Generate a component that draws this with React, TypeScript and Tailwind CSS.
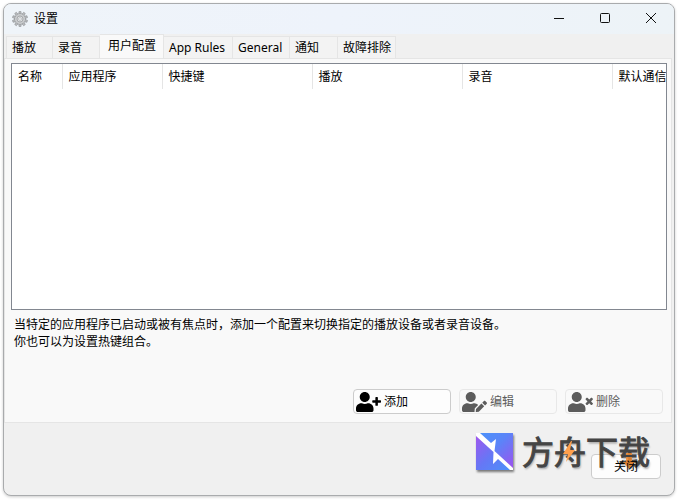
import React, { useState } from "react";
import { FaUserEdit, FaUserPlus, FaUserTimes } from "react-icons/fa";

const tabs = [
  { label: '播放', width: 'w-[47px]' },
  { label: '录音', width: 'w-[47px]' },
  { label: '用户配置', width: 'w-[64px]' },
  { label: 'App Rules', width: 'w-[69px]' },
  { label: 'General', width: 'w-[57px]' },
  { label: '通知', width: 'w-[48px]' },
  { label: '故障排除', width: 'w-[58px]' },
];

const columns = [
  { label: '名称', width: 'w-[50px]' },
  { label: '应用程序', width: 'w-[100px]' },
  { label: '快捷键', width: 'w-[150px]' },
  { label: '播放', width: 'w-[150px]' },
  { label: '录音', width: 'w-[150px]' },
  { label: '默认通信', width: 'w-[150px]' },
];

const gearTeeth = [0, 36, 72, 108, 144, 180, 216, 252, 288, 324];

function GearIcon() {
  return <svg className="h-4 w-4" viewBox="0 0 32 32" aria-hidden="true">
    <g fill="#b9bbbd" stroke="#85878a" strokeWidth="1">
      {gearTeeth.map(angle => (
        <path key={angle} d="M13.4 7 L14 0.8 H18 L18.6 7 Z" transform={`rotate(${angle} 16 16)`} />
      ))}
      <circle cx="16" cy="16" r="10.5" />
    </g>
    <circle cx="16" cy="16" r="10.2" fill="#c9cbcd" />
    <circle cx="16" cy="16" r="6" fill="#dfe1e3" stroke="#999b9d" strokeWidth="1.5" />
    <circle cx="16" cy="16" r="2.8" fill="#f4f6f8" stroke="#999b9d" strokeWidth="1" />
  </svg>
}

function TitleBar() {
  return <header className="flex h-[30px] shrink-0 items-center bg-linear-to-r from-[#eff4f9] via-[#eef3fb] to-[#edf3f7] pl-2">
    <GearIcon />
    <h1 className="pl-[6px] text-xs leading-4">设置</h1>
    <div className="ml-auto flex h-full">
      <button type="button" aria-label="最小化" className="flex w-[46px] items-center justify-center">
        <svg className="h-3 w-3" viewBox="0 0 12 12" stroke="#111" fill="none"><path d="M1 5.5H11" /></svg>
      </button>
      <button type="button" aria-label="最大化" className="flex w-[46px] items-center justify-center">
        <svg className="h-3 w-3" viewBox="0 0 12 12" stroke="#111" fill="none"><rect x="1.5" y="0.5" width="9" height="9" rx="1" /></svg>
      </button>
      <button type="button" aria-label="关闭窗口" className="flex w-[46px] items-center justify-center">
        <svg className="h-3 w-3" viewBox="0 0 12 12" stroke="#111" fill="none"><path d="M1 0L11 10M11 0L1 10" /></svg>
      </button>
    </div>
  </header>
}

function TabStrip({ active, onSelect }: {
  active: string;
  onSelect: (label: string) => void;
}) {
  return <div role="tablist" className="flex h-6 shrink-0 items-end pl-[2px]">
    {tabs.map(tab => (
      <button
        key={tab.label}
        type="button"
        role="tab"
        aria-selected={tab.label === active}
        className={`${tab.width} shrink-0 whitespace-nowrap border-t border-r border-[#e5e5e5] text-left first:border-l ${
          tab.label === active ? 'h-6 bg-[#f9f9f9] pb-[2px] pl-2' : 'h-[22px] bg-[#f3f3f3] pl-[5px]'
        }`}
        onClick={() => onSelect(tab.label)}
      >
        {tab.label}
      </button>
    ))}
  </div>
}

function ProfileTable() {
  return <div className="min-h-0 flex-1 overflow-hidden border border-[#828790] bg-white">
    <table className="w-[750px] table-fixed border-collapse">
      <thead>
        <tr>
          {columns.map(column => (
            <th key={column.label} scope="col" className={`${column.width} h-[25px] border-r border-[#e5e5e5] p-0 pl-[6px] text-left font-normal`}>
              {column.label}
            </th>
          ))}
        </tr>
      </thead>
      <tbody />
    </table>
  </div>
}

function ActionButton({ icon, label, disabled }: {
  icon: React.ReactNode;
  label: string;
  disabled?: boolean;
}) {
  return <button
    type="button"
    disabled={disabled}
    className="flex h-[25px] w-[98px] items-center gap-[3px] rounded border border-[#cccccc] bg-[#fdfdfd] pl-[2px] disabled:border-[#e8e8e8] disabled:bg-[#f9f9f9] disabled:text-[#5c5c5c]"
  >
    {icon}
    {label}
  </button>
}

function Watermark() {
  return <div className="pointer-events-none absolute right-6 bottom-[23px] flex items-center gap-2">
    <svg className="h-[38px] w-[38px] drop-shadow-[1px_2px_1px_rgba(0,0,0,0.5)]" viewBox="0 0 38 38" aria-hidden="true">
      <defs>
        <linearGradient id="upperFill" x1="0" y1="0" x2="1" y2="1">
          <stop offset="0" stopColor="#4a93fa" />
          <stop offset="0.45" stopColor="#5b84f8" />
          <stop offset="1" stopColor="#a050ee" />
        </linearGradient>
        <linearGradient id="lowerFill" x1="0" y1="0" x2="1" y2="1">
          <stop offset="0" stopColor="#a555ee" />
          <stop offset="0.5" stopColor="#6677f5" />
          <stop offset="1" stopColor="#4a93fa" />
        </linearGradient>
      </defs>
      <path d="M0 0H37V37Z" fill="url(#upperFill)" />
      <path d="M0 0V37H37Z" fill="url(#lowerFill)" />
      <path d="M0 0H4L15 10L20 6L18.5 18L37 35V37H34L22 26L17 31L17.5 19L12 14L0 3Z" fill="#fff" />
    </svg>
    <div className="relative">
      <span className="block text-[32px] leading-10 text-[#444] [-webkit-text-stroke:1px_#444] [text-shadow:1px_2px_2px_rgba(0,0,0,0.3)]">方舟下载</span>
      <svg className="absolute inset-0 h-10 w-32" viewBox="0 0 128 40" aria-hidden="true">
        <path d="M49 9L41 22H46L44 30L53 18H48L50 9Z" fill="#ffa04d" />
        <path d="M104 21H110V23H104ZM104 25H110V30H113L107 37L101 30H104Z" fill="#f08a30" opacity="0.85" />
      </svg>
    </div>
  </div>
}

export default function App() {
  const [activeTab, setActiveTab] = useState('用户配置');

  return <div className="h-screen bg-white pt-[3px] pr-1 pb-1 pl-[3px] font-['Noto_Sans','Noto_Sans_CJK_SC',sans-serif] text-xs text-black">
    <main className="relative flex h-full flex-col overflow-hidden rounded-lg border border-[#a9abad] bg-[#f0f0f0] shadow-[0_1px_3px_rgba(0,0,0,0.2)]">
      <TitleBar />
      <TabStrip active={activeTab} onSelect={setActiveTab} />
      <section role="tabpanel" aria-label={activeTab} className="mr-[2px] flex min-h-0 flex-1 flex-col border border-[#e5e5e5] bg-[#f9f9f9] pt-1 pr-1 pl-[6px]">
        <ProfileTable />
        <div className="px-[3px] pt-[6px] leading-[17px]">
          <p>当特定的应用程序已启动或被有焦点时，添加一个配置来切换指定的播放设备或者录音设备。</p>
          <p>你也可以为设置热键组合。</p>
        </div>
        <div className="flex justify-end gap-2 px-1 pt-[39px] pb-2">
          <ActionButton icon={<FaUserPlus className="h-5 w-[25px]" />} label="添加" />
          <ActionButton icon={<FaUserEdit className="h-5 w-[25px]" />} label="编辑" disabled />
          <ActionButton icon={<FaUserTimes className="h-5 w-[25px]" />} label="删除" disabled />
        </div>
      </section>
      <footer className="flex shrink-0 justify-end pt-[31px] pr-[13px] pb-4">
        <button type="button" className="h-[25px] w-[70px] rounded border border-[#cccccc] bg-[#fdfdfd]">
          {/* keep the label readable above the watermark */}
          <span className="relative z-10">关闭</span>
        </button>
      </footer>
      <Watermark />
    </main>
  </div>
}
